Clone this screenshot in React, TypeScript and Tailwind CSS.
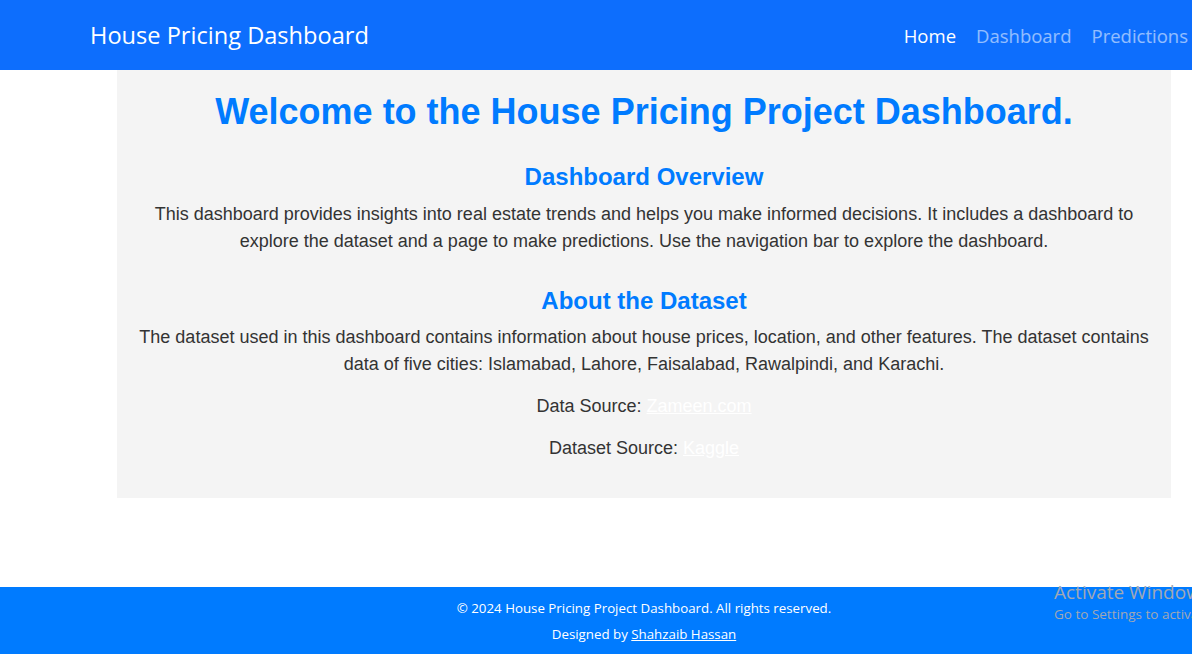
export default function App() {
  const navFont = { fontFamily: '"Open Sans", "Noto Sans", sans-serif' };
  return (
    <div className="relative flex min-h-[654px] flex-col bg-white" style={{ fontFamily: '"Liberation Sans", Arial, sans-serif' }}>
      <nav className="flex h-[70px] items-center justify-between bg-[#0d6efd] pl-[90px] pr-[4px] pt-[2px]" style={navFont}>
        <span className="text-[23.6px] text-white">House Pricing Dashboard</span>
        <div className="flex gap-[20px] text-[18.5px]">
          <a className="text-white">Home</a>
          <a className="text-white/55">Dashboard</a>
          <a className="text-white/55">Predictions</a>
        </div>
      </nav>

      <main className="flex-1">
        <section className="ml-[117px] mr-[21px] bg-[#f4f4f4] px-[20px] pb-[36px] pt-[20px] text-center text-[18px] leading-[27px] text-[#333]">
          <h1 className="text-[36px] font-bold leading-[43px] text-[#007bff]">
            Welcome to the House Pricing Project Dashboard.
          </h1>
          <h2 className="mt-[29px] text-[24px] font-bold leading-[29px] text-[#007bff]">Dashboard Overview</h2>
          <p className="mt-[10px]">
            This dashboard provides insights into real estate trends and helps you make informed decisions. It includes a dashboard to explore the dataset and a page to make predictions. Use the navigation bar to explore the dashboard.
          </p>
          <h2 className="mt-[31px] text-[24px] font-bold leading-[29px] text-[#007bff]">About the Dataset</h2>
          <p className="mt-[9px]">
            The dataset used in this dashboard contains information about house prices, location, and other features. The dataset contains data of five cities: Islamabad, Lahore, Faisalabad, Rawalpindi, and Karachi.
          </p>
          <p className="mt-[15px]">
            Data Source: <a className="text-white underline">Zameen.com</a>
          </p>
          <p className="mt-[15px]">
            Dataset Source: <a className="text-white underline">Kaggle</a>
          </p>
        </section>
      </main>

      <footer className="h-[67px] bg-[#007bff] text-[13.3px] text-white" style={navFont}>
        <div className="ml-[117px] mr-[21px] flex h-full flex-col items-center justify-center gap-[6px] pt-[2px]">
          <p>© 2024 House Pricing Project Dashboard. All rights reserved.</p>
          <p>
            Designed by <a className="underline">Shahzaib Hassan</a>
          </p>
        </div>
      </footer>

      <div className="pointer-events-none absolute bottom-[30px] left-[1054px] whitespace-nowrap text-[#a0a8b4]" style={navFont}>
        <div className="text-[19px] leading-[24px]">Activate Windows</div>
        <div className="text-[13.5px] leading-[20px]">Go to Settings to activate Windows.</div>
      </div>
    </div>
  );
}
